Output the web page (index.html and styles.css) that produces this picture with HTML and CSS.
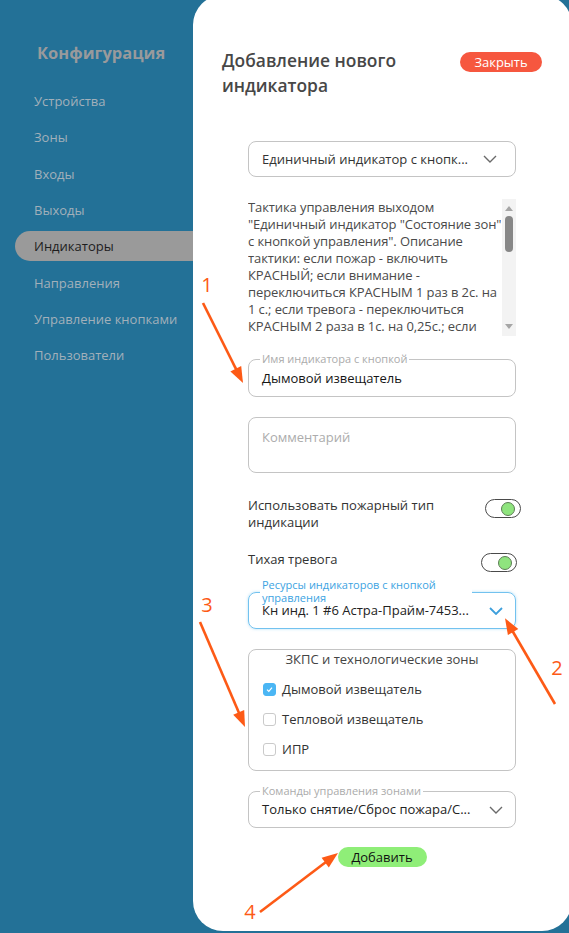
FILE: index.html
```html
<!DOCTYPE html>
<html>
<head>
<meta charset="utf-8">
<title>Конфигурация</title>
<link rel="stylesheet" href="styles.css">
</head>
<body>

<div class="app">
  <aside class="sidebar">
    <h1 class="brand">Конфигурация</h1>
    <nav class="menu">
      <a class="menu-item" href="#">Устройства</a>
      <a class="menu-item" href="#">Зоны</a>
      <a class="menu-item" href="#">Входы</a>
      <a class="menu-item" href="#">Выходы</a>
      <a class="menu-item active" href="#">Индикаторы</a>
      <a class="menu-item" href="#">Направления</a>
      <a class="menu-item" href="#">Управление кнопками</a>
      <a class="menu-item" href="#">Пользователи</a>
    </nav>
  </aside>

  <main class="panel">
    <div class="panel-head">
      <h2 class="panel-title">Добавление нового индикатора</h2>
      <button class="btn-close" type="button">Закрыть</button>
    </div>

    <div class="form">
      <div class="select tactic">
        <span>Единичный индикатор с кнопк...</span>
        <svg class="chevron" width="14" height="8" viewBox="0 0 14 8"><path d="M1 1 L7 7 L13 1"/></svg>
      </div>

      <div class="desc">
        <div class="desc-text">Тактика управления выходом<br>"Единичный индикатор "Состояние зон"<br>с кнопкой управления". Описание<br>тактики: если пожар - включить<br>КРАСНЫЙ; если внимание -<br>переключиться КРАСНЫМ 1 раз в 2с. на<br>1 с.; если тревога - переключиться<br>КРАСНЫМ 2 раза в 1с. на 0,25с.; если</div>
        <div class="scrollbar">
          <span class="sb-up"></span>
          <span class="sb-thumb"></span>
          <span class="sb-down"></span>
        </div>
      </div>

      <div class="field name">
        <span class="field-label">Имя индикатора с кнопкой</span>
        <span>Дымовой извещатель</span>
      </div>

      <div class="comment">Комментарий</div>

      <div class="toggle-row fire">
        <span class="toggle-text">Использовать пожарный тип индикации</span>
        <span class="switch"></span>
      </div>
      <div class="toggle-row quiet">
        <span class="toggle-text">Тихая тревога</span>
        <span class="switch"></span>
      </div>

      <div class="select field resources">
        <span class="field-label blue">Ресурсы индикаторов с кнопкой управления</span>
        <span>Кн инд. 1 #6 Астра-Прайм-7453...</span>
        <svg class="chevron" width="14" height="8" viewBox="0 0 14 8"><path d="M1 1 L7 7 L13 1"/></svg>
      </div>

      <div class="group">
        <div class="group-title">ЗКПС и технологические зоны</div>
        <label class="check">
          <span class="check-box on"><svg width="13" height="13" viewBox="0 0 13 13"><path d="M4 6.6 L5.8 8.4 L9 4.6"/></svg></span>
          Дымовой извещатель
        </label>
        <label class="check"><span class="check-box"></span>Тепловой извещатель</label>
        <label class="check"><span class="check-box"></span>ИПР</label>
      </div>

      <div class="select field commands">
        <span class="field-label">Команды управления зонами</span>
        <span>Только снятие/Сброс пожара/С...</span>
        <svg class="chevron" width="14" height="8" viewBox="0 0 14 8"><path d="M1 1 L7 7 L13 1"/></svg>
      </div>

      <button class="btn-add" type="button">Добавить</button>
    </div>
  </main>
</div>

<!-- пометки поверх скриншота -->
<svg class="marks" width="569" height="933" viewBox="0 0 569 933">
  <g class="mark-lines">
    <line x1="203" y1="303" x2="237.2" y2="371.4"/>
    <line x1="555" y1="704" x2="511.6" y2="629.5"/>
    <line x1="200" y1="622" x2="239.9" y2="715.1"/>
    <line x1="260" y1="912" x2="327.6" y2="860.8"/>
  </g>
  <g class="mark-heads">
    <polygon points="243,383 230.4,371.4 241.2,366"/>
    <polygon points="505,618.3 518.3,629.1 507.9,635.1"/>
    <polygon points="245,727 233.2,714.7 244.2,709.9"/>
    <polygon points="338,853 328.8,867.4 321.6,857.8"/>
  </g>
  <g class="mark-nums">
    <text x="207" y="292">1</text>
    <text x="557" y="675">2</text>
    <text x="207" y="612">3</text>
    <text x="250" y="919">4</text>
  </g>
</svg>

</body>
</html>
```

FILE: styles.css
```css
html, body {
  margin: 0;
  height: 100%;
  overflow: hidden;
}

body {
  position: relative;
  background: #237197;
  font-family: "Open Sans", "Liberation Sans", sans-serif;
}

.app {
  display: flex;
  height: 933px;
}

/* sidebar */
.sidebar {
  width: 193px;
  flex: none;
  padding-top: 40px;
  box-sizing: border-box;
}

.brand {
  margin: 0 0 0 37px;
  font-size: 16.5px;
  line-height: 25px;
  font-weight: 700;
  color: #999a9c;
}

.menu {
  margin-top: 21px;
  display: flex;
  flex-direction: column;
  gap: 6.33px;
}

.menu-item {
  display: block;
  height: 30px;
  line-height: 30px;
  margin-left: 15px;
  padding-left: 19px;
  font-size: 13px;
  color: #a2b0ba;
  text-decoration: none;
  border-radius: 15px 0 0 15px;
}

.menu-item.active {
  background: #9a9a9a;
  color: #1d1d1d;
}

/* panel */
.panel {
  width: 379px;
  height: 936px;
  margin-top: -5px;
  flex: none;
  background: #fff;
  border-radius: 30px;
  box-sizing: border-box;
  padding: 53px 30px 0 29px;
}

.panel-head {
  display: flex;
  justify-content: space-between;
  align-items: flex-start;
}

.panel-title {
  margin: 0;
  font-size: 17.4px;
  line-height: 25px;
  font-weight: 600;
  color: #474747;
}

.btn-close {
  flex: none;
  margin-top: 4px;
  width: 82px;
  height: 20px;
  padding: 0;
  border: 0;
  border-radius: 10px;
  background: #f6573f;
  color: #fff;
  font: 13px/20px "Open Sans", sans-serif;
}

.form {
  width: 268px;
  margin: 43px auto 0;
  font-size: 13px;
  line-height: 17px;
}

/* selects and fields */
.select {
  height: 36px;
  border: 1px solid #c4c4c4;
  border-radius: 8px;
  box-sizing: border-box;
  display: flex;
  align-items: center;
  justify-content: space-between;
  padding: 0 18px 0 13px;
  color: #333;
}

.chevron path {
  fill: none;
  stroke: #6a6a6a;
  stroke-width: 1.4;
}

.field {
  position: relative;
  height: 38px;
  border: 1px solid #c4c4c4;
  border-radius: 8px;
  box-sizing: border-box;
  display: flex;
  align-items: center;
  padding: 0 13px;
  color: #151515;
}

.field-label {
  position: absolute;
  left: 11px;
  top: -8px;
  padding: 0 2px;
  background: #fff;
  font-size: 11px;
  line-height: 14px;
  color: #ababab;
  white-space: nowrap;
}

.name {
  margin-top: 23px;
}

.desc {
  margin-top: 22px;
  height: 137px;
  display: flex;
}

.desc-text {
  flex: 1;
  color: #4a4a4a;
  letter-spacing: -0.1px;
  white-space: nowrap;
  overflow: hidden;
}

.scrollbar {
  width: 14px;
  flex: none;
  margin-left: 1px;
  background: #f3f3f3;
  display: flex;
  flex-direction: column;
  align-items: center;
}

.sb-up {
  margin-top: 7px;
  border-left: 4px solid transparent;
  border-right: 4px solid transparent;
  border-bottom: 5px solid #a6a6a6;
}

.sb-thumb {
  margin-top: 5px;
  width: 8px;
  height: 36px;
  border-radius: 4px;
  background: #878787;
}

.sb-down {
  margin-top: auto;
  margin-bottom: 7px;
  border-left: 4px solid transparent;
  border-right: 4px solid transparent;
  border-top: 5px solid #a6a6a6;
}

.comment {
  margin-top: 20px;
  height: 56px;
  border: 1px solid #c4c4c4;
  border-radius: 8px;
  box-sizing: border-box;
  padding: 11px 13px 0;
  color: #acacac;
}

/* toggles */
.toggle-row {
  display: flex;
  justify-content: space-between;
  align-items: flex-start;
  color: #333;
}

.toggle-row.fire {
  margin-top: 24px;
}

.toggle-row.quiet {
  margin-top: 19.5px;
}

.toggle-text {
  width: 200px;
}

.switch {
  flex: none;
  width: 36px;
  height: 19px;
  margin-top: 2px;
  border: 1px solid #4a4a4a;
  border-radius: 10px;
  box-sizing: border-box;
  display: flex;
  align-items: center;
  justify-content: flex-end;
  padding-right: 4px;
}

.switch::after {
  content: "";
  width: 14px;
  height: 14px;
  border-radius: 50%;
  background: #8fe47e;
  border: 1px solid #5d7d56;
  box-sizing: border-box;
}

.fire .switch {
  margin-right: -5px;
  padding-right: 5px;
}

.quiet .switch {
  margin-top: 2.5px;
  margin-right: -1px;
}

.resources,
.commands {
  height: 37px;
  margin-top: 20px;
  padding-right: 12px;
  color: #222;
}

.resources {
  border-color: #72c2ef;
  box-shadow: 0 0 3px rgba(114, 194, 239, 0.55);
}

.resources .chevron path {
  stroke: #3d9fdc;
  stroke-width: 1.8;
}

.field-label.blue {
  top: -15px;
  width: 208px;
  white-space: normal;
  line-height: 13px;
  color: #3ca3e2;
}

/* zones group */
.group {
  margin-top: 20px;
  border: 1px solid #c4c4c4;
  border-radius: 8px;
  padding: 1px 0 6px 14px;
}

.group-title {
  margin-left: -14px;
  margin-bottom: 6px;
  text-align: center;
  color: #444;
}

.check {
  display: flex;
  align-items: center;
  gap: 6px;
  height: 30px;
  color: #333;
}

.check-box {
  width: 13px;
  height: 13px;
  border: 1px solid #cacaca;
  border-radius: 3px;
  box-sizing: border-box;
  display: flex;
}

.check-box.on {
  background: #4bb6f4;
  border-color: #4bb6f4;
}

.check-box svg {
  margin: -1px;
}

.check-box path {
  fill: none;
  stroke: #fff;
  stroke-width: 1.2;
}

.btn-add {
  display: block;
  margin: 19px auto 0;
  width: 89px;
  height: 20px;
  padding: 0;
  border: 0;
  border-radius: 10px;
  background: #8fee78;
  color: #111;
  font: 13px/20px "Open Sans", sans-serif;
}

/* red marks */
.marks {
  position: absolute;
  left: 0;
  top: 0;
  pointer-events: none;
}

.mark-lines line {
  stroke: #fd5a16;
  stroke-width: 2.6;
}

.mark-heads polygon {
  fill: #fd5a16;
}

.mark-nums text {
  fill: #fd5a16;
  font-family: "Open Sans", sans-serif;
  font-size: 20px;
  text-anchor: middle;
}
```
